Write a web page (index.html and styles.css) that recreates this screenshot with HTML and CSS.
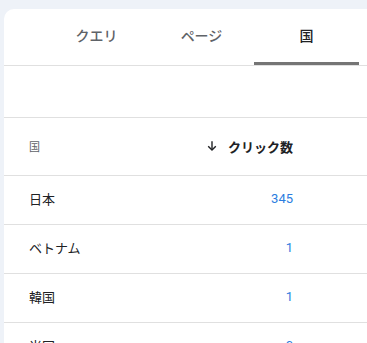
FILE: index.html
```html
<!DOCTYPE html>
<html lang="ja">
<head>
  <meta charset="UTF-8" />
  <meta name="viewport" content="width=device-width, initial-scale=1.0">
  <title>検索パフォーマンス</title>
  <link rel="stylesheet" href="styles.css">
</head>
<body>
  <div class="card">
    <div class="tabs">
      <div class="tab">クエリ</div>
      <div class="tab">ページ</div>
      <div class="tab active">国</div>
    </div>
    <div class="toolbar"></div>
    <div class="table">
      <div class="row head">
        <div class="cell name">国</div>
        <div class="cell clicks">
          <svg width="14" height="14" viewBox="0 0 24 24" fill="none" stroke="currentColor" stroke-width="2.4">
            <path d="M12 4v15"></path>
            <path d="M5.5 12.5l6.5 6.5 6.5-6.5"></path>
          </svg>
          クリック数
        </div>
      </div>
      <div class="row">
        <div class="cell name">日本</div>
        <div class="cell clicks num">345</div>
      </div>
      <div class="row">
        <div class="cell name">ベトナム</div>
        <div class="cell clicks num">1</div>
      </div>
      <div class="row">
        <div class="cell name">韓国</div>
        <div class="cell clicks num">1</div>
      </div>
      <div class="row">
        <div class="cell name">米国</div>
        <div class="cell clicks num">0</div>
      </div>
    </div>
  </div>
</body>
</html>
```

FILE: styles.css
```css
:root {
  --page-bg: #eef2f8;
  --line: #e0e0e0;
  --text: #202124;
  --muted: #5f6368;
  --link: #2b7de0;
}

* {
  box-sizing: border-box;
  margin: 0;
  padding: 0;
}

body {
  background: var(--page-bg);
  font-family: Roboto, "Noto Sans CJK JP", sans-serif;
  color: var(--text);
  overflow: hidden;
}

.card {
  margin: 9px 0 0 4px;
  width: 420px;
  background: #fff;
  border-radius: 10px 0 0 0;
}

/* Abas */
.tabs {
  display: flex;
  padding-left: 40px;
  height: 57px;
  border-bottom: 1px solid var(--line);
}

.tab {
  width: 105px;
  display: flex;
  align-items: center;
  justify-content: center;
  font-size: 14px;
  font-weight: 500;
  color: var(--muted);
  border-bottom: 3px solid transparent;
  padding-bottom: 1px;
}

.tab.active {
  color: var(--text);
  border-bottom-color: #757575;
}

.toolbar {
  height: 52px;
  border-bottom: 1px solid var(--line);
}

/* Tabela */
.row {
  display: flex;
  align-items: center;
  height: 49px;
  padding: 0 0 3px 25px;
  border-bottom: 1px solid var(--line);
  font-size: 13px;
  white-space: nowrap;
}

.row.head {
  height: 58px;
  padding-bottom: 1px;
}

.name {
  width: 155px;
}

.clicks {
  width: 109px;
  display: flex;
  align-items: center;
  justify-content: flex-end;
}

.head .name {
  font-size: 11px;
  color: var(--muted);
}

.head .clicks {
  font-size: 13px;
  font-weight: 700;
  gap: 9px;
}

.num {
  color: var(--link);
}
```
